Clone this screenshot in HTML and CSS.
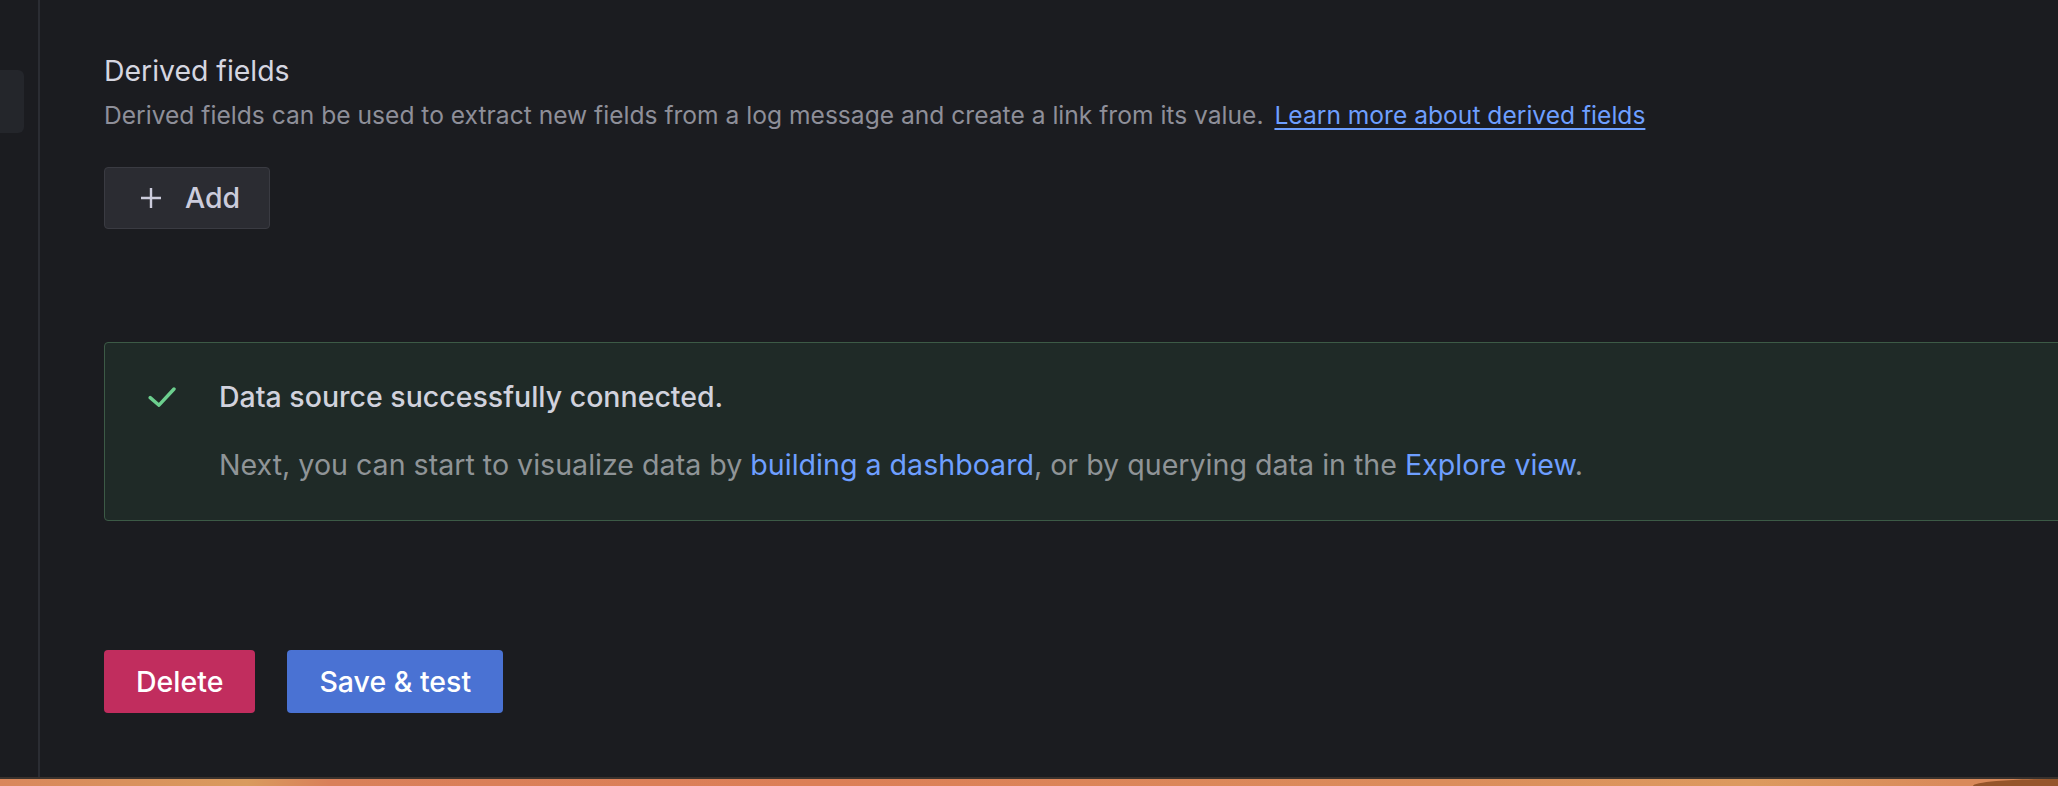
FILE: index.html
```html
<!DOCTYPE html>
<html lang="en">
<head>
<meta charset="utf-8">
<title>Data source settings</title>
<link rel="stylesheet" href="styles.css">
</head>
<body>
<div class="window">
  <aside class="sidebar">
    <div class="nav-item"></div>
  </aside>
  <div class="divider"></div>
  <main class="content">
    <section class="section">
      <h3 class="section-title">Derived fields</h3>
      <p class="section-desc">Derived fields can be used to extract new fields from a log message and create a link from its value. <a class="desc-link" href="#">Learn more about derived fields</a></p>
      <button class="btn btn-secondary" type="button">
        <svg class="btn-icon" width="28" height="28" viewBox="0 0 28 28" aria-hidden="true"><path d="M14 4v20M4 14h20" stroke="#ccccdc" stroke-width="2.4" fill="none"/></svg>
        <span>Add</span>
      </button>
    </section>
    <div class="alert">
      <svg class="alert-icon" width="28" height="20" viewBox="0 0 28 20" aria-hidden="true"><path d="M2.2 10.6 L11 18.2 L26 2" stroke="#6ccf8e" stroke-width="3.4" fill="none" stroke-linecap="round" stroke-linejoin="round"/></svg>
      <div class="alert-body">
        <div class="alert-title">Data source successfully connected.</div>
        <div class="alert-text">Next, you can start to visualize data by <a href="#" class="alert-link">building a dashboard</a>, or by querying data in the <a href="#" class="alert-link">Explore view</a>.</div>
      </div>
    </div>
    <div class="actions">
      <button class="btn btn-danger" type="button">Delete</button>
      <button class="btn btn-primary" type="button">Save &amp; test</button>
    </div>
  </main>
</div>
<div class="desktop">
  <div class="desktop-strip"></div>
  <div class="desktop-corner"></div>
</div>
</body>
</html>
```
FILE: styles.css
```css
html, body {
  margin: 0;
  padding: 0;
  background: #1b1c20;
  overflow: hidden;
}
body {
  font-family: Inter, "Noto Sans", "Liberation Sans", sans-serif;
  color: #ccccdc;
  width: 2058px;
  height: 786px;
}
.window {
  display: flex;
  height: 777px;
  background: #1b1c20;
  overflow: hidden;
}
.sidebar {
  width: 38px;
  flex: none;
  padding-top: 70px;
  box-sizing: border-box;
}
.nav-item {
  width: 24px;
  height: 63px;
  background: #24262b;
  border-radius: 0 6px 6px 0;
}
.divider {
  width: 2px;
  flex: none;
  background: #2b2d33;
}
.content {
  flex: none;
  width: 2100px;
  padding: 54px 0 0 64px;
  box-sizing: border-box;
}
.section-title {
  margin: 0;
  font-size: 28.4px;
  line-height: 34px;
  font-weight: 400;
  color: #d5d6e0;
}
.section-desc {
  margin: 9px 0 0;
  font-size: 24.6px;
  line-height: 36px;
  color: #8e8f99;
}
.desc-link {
  color: #6e9fff;
  text-decoration: underline;
  text-underline-offset: 4px;
  text-decoration-thickness: 2px;
  margin-left: 4px;
}
.btn {
  font-family: Inter, "Noto Sans", "Liberation Sans", sans-serif;
  font-size: 28.5px;
  font-weight: 500;
  line-height: 36px;
  border: none;
  border-radius: 4px;
  display: inline-flex;
  align-items: center;
  box-sizing: border-box;
  padding: 0 32px;
  cursor: pointer;
}
.btn-secondary {
  margin-top: 34px;
  height: 62px;
  width: 166px;
  background: #2b2c32;
  border: 1px solid #3a3b42;
  color: #ccccdc;
  gap: 20px;
}
.btn-icon {
  flex: none;
}
.alert {
  margin-top: 113px;
  height: 179px;
  box-sizing: border-box;
  background: #1f2a27;
  border: 1px solid #3c5a46;
  border-radius: 4px;
  padding: 36px 0 36px 43px;
  display: flex;
  align-items: flex-start;
  gap: 43px;
}
.alert-icon {
  flex: none;
  margin-top: 8px;
}
.alert-title {
  font-size: 28.5px;
  line-height: 36px;
  font-weight: 500;
  color: #d1d2dd;
}
.alert-text {
  margin-top: 32px;
  font-size: 28.6px;
  line-height: 36px;
  color: #8f9497;
}
.alert-link {
  color: #6e9fff;
  text-decoration: none;
}
.actions {
  margin-top: 129px;
  display: flex;
  gap: 32px;
}
.btn-danger,
.btn-primary {
  height: 63px;
  color: #ffffff;
}
.btn-danger {
  background: #c12d5e;
}
.btn-primary {
  background: #4a72d3;
}
.desktop {
  position: relative;
  height: 9px;
}
.desktop-strip {
  height: 2px;
  background: #3a322d;
}
.desktop-corner {
  height: 7px;
  background: linear-gradient(90deg, #d9875c 0%, #d99b5e 12%, #d9805a 16%, #dc7f57 40%, #db8d5c 70%, #dc9a5f 85%, #d98a5b 95%);
}
.desktop-corner::after {
  content: "";
  position: absolute;
  right: 0;
  bottom: 0;
  width: 85px;
  height: 7px;
  background: #95552b;
  border-top-left-radius: 80px 7px;
}
```
